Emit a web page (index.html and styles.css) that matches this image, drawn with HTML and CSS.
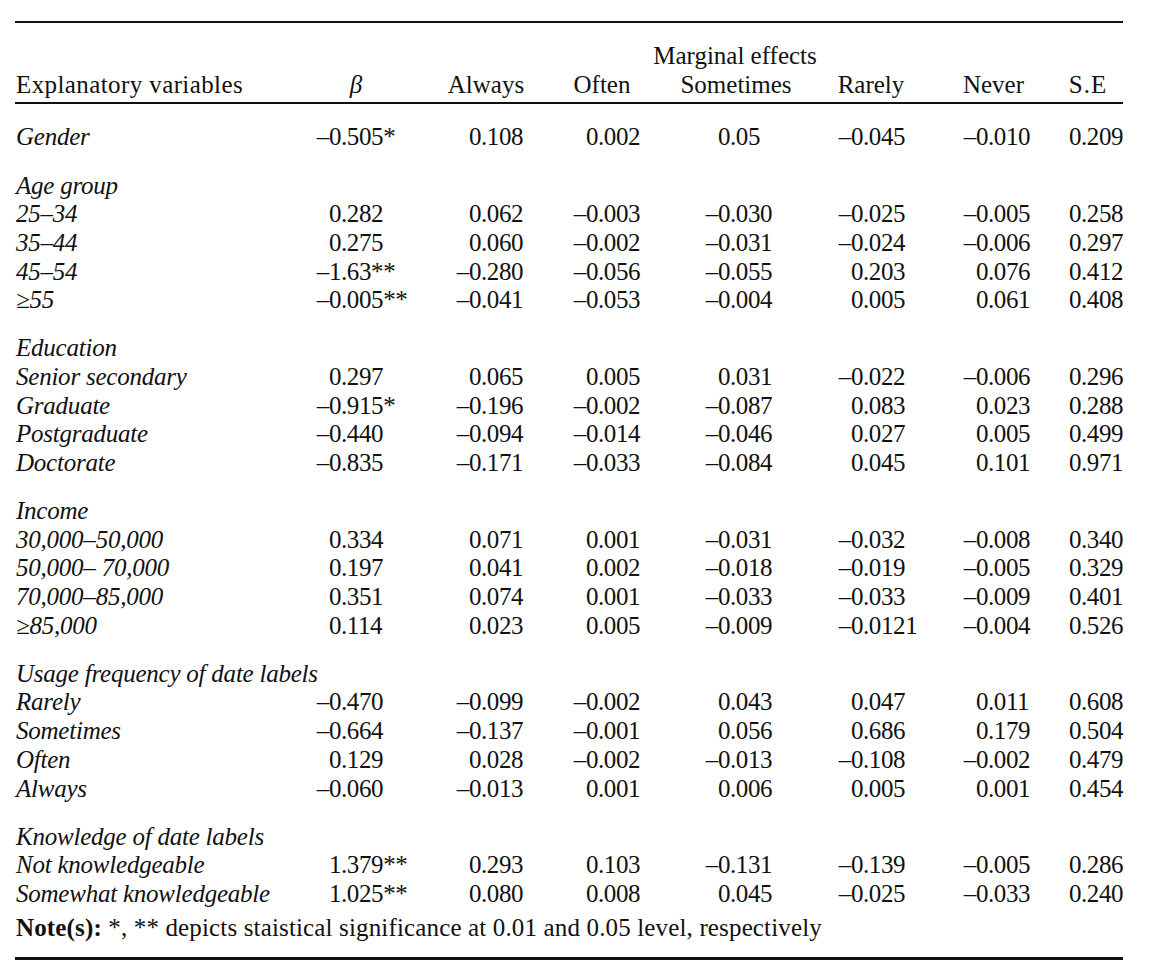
FILE: index.html
```html
<!DOCTYPE html>
<html>
<head>
<meta charset="utf-8">
<link rel="stylesheet" href="styles.css">
</head>
<body>
<div class="table">
  <div class="head">
    <div class="row">
      <div class="span-me">Marginal effects</div>
    </div>
    <div class="row">
      <div class="lbl up">Explanatory variables</div>
      <div class="hd beta"><i>β</i></div>
      <div class="hd">Always</div>
      <div class="hd often">Often</div>
      <div class="hd">Sometimes</div>
      <div class="hd">Rarely</div>
      <div class="hd">Never</div>
      <div class="hd se">S.E</div>
    </div>
  </div>
  <div class="body">
    <div class="row first">
      <div class="lbl">Gender</div>
      <span class="i">–0</span><span class="f">.505*</span>
      <span class="i">0</span><span class="f">.108</span>
      <span class="i">0</span><span class="f">.002</span>
      <span class="i">0</span><span class="f">.05</span>
      <span class="i">–0</span><span class="f">.045</span>
      <span class="i">–0</span><span class="f">.010</span>
      <span class="i">0</span><span class="f">.209</span>
    </div>

    <div class="row group gap-a"><div class="lbl">Age group</div></div>
    <div class="row">
      <div class="lbl">25–34</div>
      <span class="i">0</span><span class="f">.282</span>
      <span class="i">0</span><span class="f">.062</span>
      <span class="i">–0</span><span class="f">.003</span>
      <span class="i">–0</span><span class="f">.030</span>
      <span class="i">–0</span><span class="f">.025</span>
      <span class="i">–0</span><span class="f">.005</span>
      <span class="i">0</span><span class="f">.258</span>
    </div>
    <div class="row">
      <div class="lbl">35–44</div>
      <span class="i">0</span><span class="f">.275</span>
      <span class="i">0</span><span class="f">.060</span>
      <span class="i">–0</span><span class="f">.002</span>
      <span class="i">–0</span><span class="f">.031</span>
      <span class="i">–0</span><span class="f">.024</span>
      <span class="i">–0</span><span class="f">.006</span>
      <span class="i">0</span><span class="f">.297</span>
    </div>
    <div class="row">
      <div class="lbl">45–54</div>
      <span class="i">–1</span><span class="f">.63**</span>
      <span class="i">–0</span><span class="f">.280</span>
      <span class="i">–0</span><span class="f">.056</span>
      <span class="i">–0</span><span class="f">.055</span>
      <span class="i">0</span><span class="f">.203</span>
      <span class="i">0</span><span class="f">.076</span>
      <span class="i">0</span><span class="f">.412</span>
    </div>
    <div class="row">
      <div class="lbl">≥55</div>
      <span class="i">–0</span><span class="f">.005**</span>
      <span class="i">–0</span><span class="f">.041</span>
      <span class="i">–0</span><span class="f">.053</span>
      <span class="i">–0</span><span class="f">.004</span>
      <span class="i">0</span><span class="f">.005</span>
      <span class="i">0</span><span class="f">.061</span>
      <span class="i">0</span><span class="f">.408</span>
    </div>

    <div class="row group gap"><div class="lbl">Education</div></div>
    <div class="row">
      <div class="lbl">Senior secondary</div>
      <span class="i">0</span><span class="f">.297</span>
      <span class="i">0</span><span class="f">.065</span>
      <span class="i">0</span><span class="f">.005</span>
      <span class="i">0</span><span class="f">.031</span>
      <span class="i">–0</span><span class="f">.022</span>
      <span class="i">–0</span><span class="f">.006</span>
      <span class="i">0</span><span class="f">.296</span>
    </div>
    <div class="row">
      <div class="lbl">Graduate</div>
      <span class="i">–0</span><span class="f">.915*</span>
      <span class="i">–0</span><span class="f">.196</span>
      <span class="i">–0</span><span class="f">.002</span>
      <span class="i">–0</span><span class="f">.087</span>
      <span class="i">0</span><span class="f">.083</span>
      <span class="i">0</span><span class="f">.023</span>
      <span class="i">0</span><span class="f">.288</span>
    </div>
    <div class="row">
      <div class="lbl">Postgraduate</div>
      <span class="i">–0</span><span class="f">.440</span>
      <span class="i">–0</span><span class="f">.094</span>
      <span class="i">–0</span><span class="f">.014</span>
      <span class="i">–0</span><span class="f">.046</span>
      <span class="i">0</span><span class="f">.027</span>
      <span class="i">0</span><span class="f">.005</span>
      <span class="i">0</span><span class="f">.499</span>
    </div>
    <div class="row">
      <div class="lbl">Doctorate</div>
      <span class="i">–0</span><span class="f">.835</span>
      <span class="i">–0</span><span class="f">.171</span>
      <span class="i">–0</span><span class="f">.033</span>
      <span class="i">–0</span><span class="f">.084</span>
      <span class="i">0</span><span class="f">.045</span>
      <span class="i">0</span><span class="f">.101</span>
      <span class="i">0</span><span class="f">.971</span>
    </div>

    <div class="row group gap"><div class="lbl">Income</div></div>
    <div class="row">
      <div class="lbl">30,000–50,000</div>
      <span class="i">0</span><span class="f">.334</span>
      <span class="i">0</span><span class="f">.071</span>
      <span class="i">0</span><span class="f">.001</span>
      <span class="i">–0</span><span class="f">.031</span>
      <span class="i">–0</span><span class="f">.032</span>
      <span class="i">–0</span><span class="f">.008</span>
      <span class="i">0</span><span class="f">.340</span>
    </div>
    <div class="row">
      <div class="lbl">50,000– 70,000</div>
      <span class="i">0</span><span class="f">.197</span>
      <span class="i">0</span><span class="f">.041</span>
      <span class="i">0</span><span class="f">.002</span>
      <span class="i">–0</span><span class="f">.018</span>
      <span class="i">–0</span><span class="f">.019</span>
      <span class="i">–0</span><span class="f">.005</span>
      <span class="i">0</span><span class="f">.329</span>
    </div>
    <div class="row">
      <div class="lbl">70,000–85,000</div>
      <span class="i">0</span><span class="f">.351</span>
      <span class="i">0</span><span class="f">.074</span>
      <span class="i">0</span><span class="f">.001</span>
      <span class="i">–0</span><span class="f">.033</span>
      <span class="i">–0</span><span class="f">.033</span>
      <span class="i">–0</span><span class="f">.009</span>
      <span class="i">0</span><span class="f">.401</span>
    </div>
    <div class="row">
      <div class="lbl">≥85,000</div>
      <span class="i">0</span><span class="f">.114</span>
      <span class="i">0</span><span class="f">.023</span>
      <span class="i">0</span><span class="f">.005</span>
      <span class="i">–0</span><span class="f">.009</span>
      <span class="i">–0</span><span class="f">.0121</span>
      <span class="i">–0</span><span class="f">.004</span>
      <span class="i">0</span><span class="f">.526</span>
    </div>

    <div class="row group gap"><div class="lbl">Usage frequency of date labels</div></div>
    <div class="row">
      <div class="lbl">Rarely</div>
      <span class="i">–0</span><span class="f">.470</span>
      <span class="i">–0</span><span class="f">.099</span>
      <span class="i">–0</span><span class="f">.002</span>
      <span class="i">0</span><span class="f">.043</span>
      <span class="i">0</span><span class="f">.047</span>
      <span class="i">0</span><span class="f">.011</span>
      <span class="i">0</span><span class="f">.608</span>
    </div>
    <div class="row">
      <div class="lbl">Sometimes</div>
      <span class="i">–0</span><span class="f">.664</span>
      <span class="i">–0</span><span class="f">.137</span>
      <span class="i">–0</span><span class="f">.001</span>
      <span class="i">0</span><span class="f">.056</span>
      <span class="i">0</span><span class="f">.686</span>
      <span class="i">0</span><span class="f">.179</span>
      <span class="i">0</span><span class="f">.504</span>
    </div>
    <div class="row">
      <div class="lbl">Often</div>
      <span class="i">0</span><span class="f">.129</span>
      <span class="i">0</span><span class="f">.028</span>
      <span class="i">–0</span><span class="f">.002</span>
      <span class="i">–0</span><span class="f">.013</span>
      <span class="i">–0</span><span class="f">.108</span>
      <span class="i">–0</span><span class="f">.002</span>
      <span class="i">0</span><span class="f">.479</span>
    </div>
    <div class="row">
      <div class="lbl">Always</div>
      <span class="i">–0</span><span class="f">.060</span>
      <span class="i">–0</span><span class="f">.013</span>
      <span class="i">0</span><span class="f">.001</span>
      <span class="i">0</span><span class="f">.006</span>
      <span class="i">0</span><span class="f">.005</span>
      <span class="i">0</span><span class="f">.001</span>
      <span class="i">0</span><span class="f">.454</span>
    </div>

    <div class="row group gap"><div class="lbl">Knowledge of date labels</div></div>
    <div class="row">
      <div class="lbl">Not knowledgeable</div>
      <span class="i">1</span><span class="f">.379**</span>
      <span class="i">0</span><span class="f">.293</span>
      <span class="i">0</span><span class="f">.103</span>
      <span class="i">–0</span><span class="f">.131</span>
      <span class="i">–0</span><span class="f">.139</span>
      <span class="i">–0</span><span class="f">.005</span>
      <span class="i">0</span><span class="f">.286</span>
    </div>
    <div class="row">
      <div class="lbl">Somewhat knowledgeable</div>
      <span class="i">1</span><span class="f">.025**</span>
      <span class="i">0</span><span class="f">.080</span>
      <span class="i">0</span><span class="f">.008</span>
      <span class="i">0</span><span class="f">.045</span>
      <span class="i">–0</span><span class="f">.025</span>
      <span class="i">–0</span><span class="f">.033</span>
      <span class="i">0</span><span class="f">.240</span>
    </div>

    <div class="note"><b>Note(s):</b> *, ** depicts staistical significance at 0.01 and 0.05 level, respectively</div>
  </div>
</div>
</body>
</html>
```

FILE: styles.css
```css
html, body {
  margin: 0;
  padding: 0;
  background: #ffffff;
}

body {
  font-family: "Liberation Serif", "Times New Roman", serif;
  font-size: 25px;
  line-height: 28.7px;
  color: #111111;
}

.table {
  margin: 21px 0 0 15px;
  width: 1108px;
  border-top: 2px solid #111111;
  border-bottom: 3px solid #111111;
}

.head {
  padding: 19px 0 3px 0;
  border-bottom: 2px solid #111111;
}

.body {
  padding: 19px 0 15px 0;
}

.row {
  display: grid;
  grid-template-columns: 275px 51px 79px 61px 59px 58px 62px 70px 70px 63px 67px 58px 57px 36px 42px;
  height: 28.7px;
  white-space: nowrap;
}

.lbl {
  grid-column: 1 / 2;
  padding-left: 1px;
  font-style: italic;
  letter-spacing: -0.23px;
}

.lbl.up {
  font-style: normal;
  letter-spacing: 0.4px;
}

.span-me {
  grid-column: 6 / 12;
  text-align: center;
}

.hd {
  grid-column: span 2;
  text-align: center;
  padding-left: 12px;
}

.hd.beta {
  padding-left: 2px;
}

.hd.often {
  padding-left: 4px;
}

.hd.se {
  padding-left: 8px;
  letter-spacing: 1px;
}

.i {
  text-align: right;
  letter-spacing: -0.4px;
}

.f {
  text-align: left;
  letter-spacing: -0.4px;
}

.gap-a {
  margin-top: 19.5px;
}

.gap {
  margin-top: 19.3px;
}

.note {
  margin-top: 5px;
  padding-left: 1px;
  white-space: nowrap;
  letter-spacing: 0.15px;
}

.note b {
  font-weight: bold;
}
```
